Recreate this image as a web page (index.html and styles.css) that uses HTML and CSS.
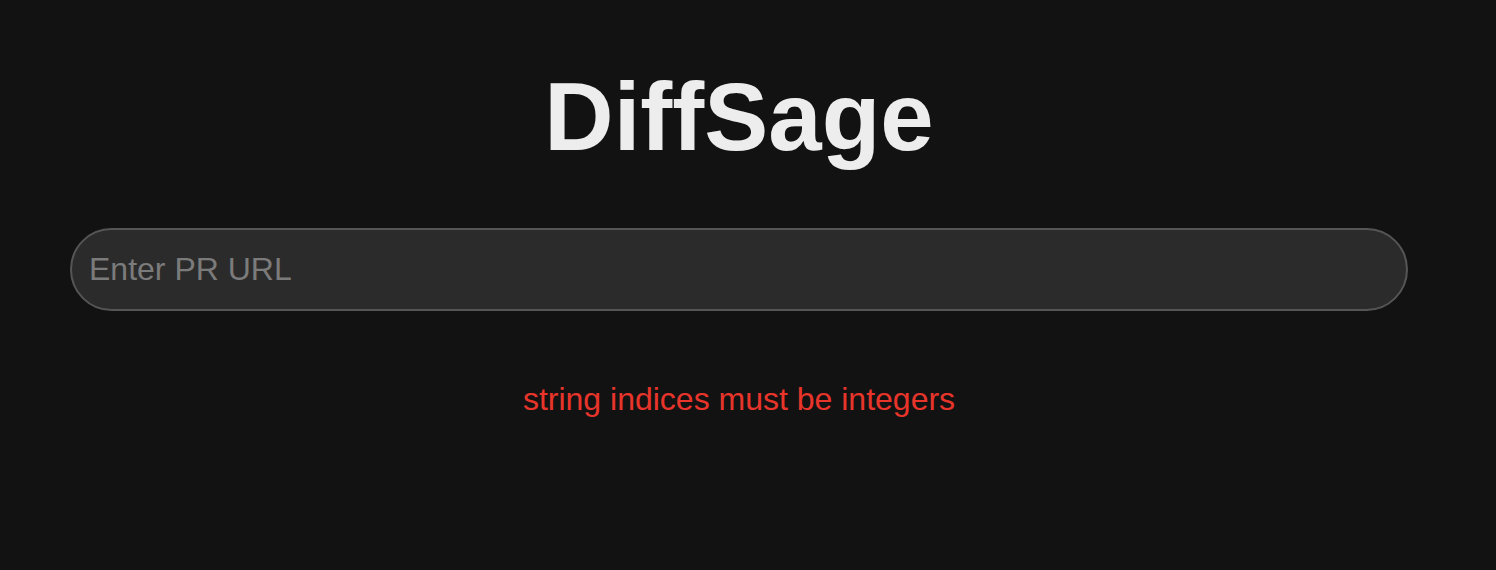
FILE: index.html
```html
<!DOCTYPE html>
<html>
<head>
<meta charset="utf-8">
<link rel="stylesheet" href="styles.css">
</head>
<body>
<main class="app">
  <h1 class="title">DiffSage</h1>
  <form class="form">
    <input class="url-input" type="text" placeholder="Enter PR URL">
  </form>
  <p class="error">string indices must be integers</p>
</main>
</body>
</html>
```
FILE: styles.css
```css
html, body {
  margin: 0;
  padding: 0;
  background: #121212;
  height: 100%;
}
body {
  font-family: "Liberation Sans", Arial, Helvetica, sans-serif;
  overflow: hidden;
}
.app {
  width: 1478px;
  box-sizing: border-box;
  padding: 0 70px;
  display: flex;
  flex-direction: column;
  align-items: center;
}
.title {
  margin: 62px 0 0;
  font-size: 96px;
  line-height: 1.15;
  font-weight: 700;
  color: #ededed;
}
.form {
  width: 100%;
  margin-top: 56px;
}
.url-input {
  display: block;
  width: 100%;
  box-sizing: border-box;
  height: 83px;
  padding: 0 17px;
  font-family: inherit;
  font-size: 32px;
  color: #eaeaea;
  background: #2b2b2b;
  border: 2px solid #555555;
  border-radius: 42px;
  outline: none;
}
.url-input::placeholder {
  color: #7b7b7b;
}
.error {
  margin: 70px 0 0;
  font-size: 32px;
  line-height: 1.15;
  color: #e8352b;
}
```
